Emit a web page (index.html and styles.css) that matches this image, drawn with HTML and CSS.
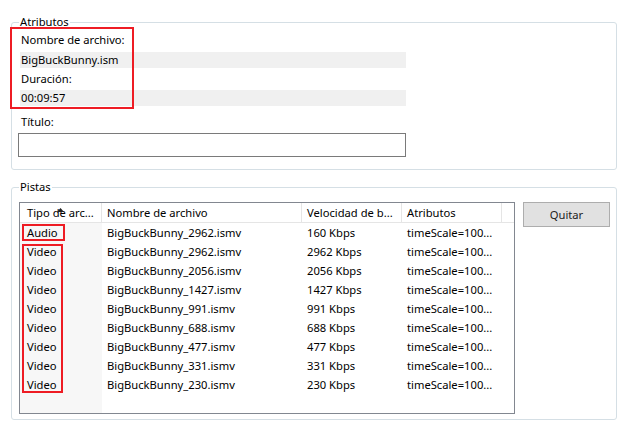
FILE: index.html
```html
<!DOCTYPE html>
<html lang="es">
<head>
<meta charset="utf-8">
<title>Atributos</title>
<link rel="stylesheet" href="styles.css">
</head>
<body>
<div class="page">
  <fieldset class="group group-attr">
    <legend>Atributos</legend>
    <div class="label">Nombre de archivo:</div>
    <div class="value">BigBuckBunny.ism</div>
    <div class="label label-gap">Duración:</div>
    <div class="value">00:09:57</div>
    <div class="label label-title">Título:</div>
    <div class="textbox"></div>
  </fieldset>

  <fieldset class="group group-tracks">
    <legend>Pistas</legend>
    <div class="tracks">
      <div class="listview">
        <div class="lv-header">
          <div class="hcell c1">Tipo de arc...<svg class="sort" width="7" height="4" viewBox="0 0 7 4"><polygon points="0,4 3.5,0 7,4" fill="#222"/></svg></div>
          <div class="hcell c2">Nombre de archivo</div>
          <div class="hcell c3">Velocidad de b...</div>
          <div class="hcell c4">Atributos</div>
        </div>
        <div class="lv-body">
          <div class="row"><span class="cell c1">Audio</span><span class="cell c2">BigBuckBunny_2962.ismv</span><span class="cell c3">160 Kbps</span><span class="cell c4">timeScale=100...</span></div>
          <div class="row"><span class="cell c1">Video</span><span class="cell c2">BigBuckBunny_2962.ismv</span><span class="cell c3">2962 Kbps</span><span class="cell c4">timeScale=100...</span></div>
          <div class="row"><span class="cell c1">Video</span><span class="cell c2">BigBuckBunny_2056.ismv</span><span class="cell c3">2056 Kbps</span><span class="cell c4">timeScale=100...</span></div>
          <div class="row"><span class="cell c1">Video</span><span class="cell c2">BigBuckBunny_1427.ismv</span><span class="cell c3">1427 Kbps</span><span class="cell c4">timeScale=100...</span></div>
          <div class="row"><span class="cell c1">Video</span><span class="cell c2">BigBuckBunny_991.ismv</span><span class="cell c3">991 Kbps</span><span class="cell c4">timeScale=100...</span></div>
          <div class="row"><span class="cell c1">Video</span><span class="cell c2">BigBuckBunny_688.ismv</span><span class="cell c3">688 Kbps</span><span class="cell c4">timeScale=100...</span></div>
          <div class="row"><span class="cell c1">Video</span><span class="cell c2">BigBuckBunny_477.ismv</span><span class="cell c3">477 Kbps</span><span class="cell c4">timeScale=100...</span></div>
          <div class="row"><span class="cell c1">Video</span><span class="cell c2">BigBuckBunny_331.ismv</span><span class="cell c3">331 Kbps</span><span class="cell c4">timeScale=100...</span></div>
          <div class="row"><span class="cell c1">Video</span><span class="cell c2">BigBuckBunny_230.ismv</span><span class="cell c3">230 Kbps</span><span class="cell c4">timeScale=100...</span></div>
        </div>
      </div>
      <button class="btn" type="button">Quitar</button>
    </div>
  </fieldset>

  <div class="mark mark-attr"></div>
  <div class="mark mark-audio"></div>
  <div class="mark mark-video"></div>
</div>
</body>
</html>
```

FILE: styles.css
```css
* { box-sizing: border-box; }

html, body {
  margin: 0;
  padding: 0;
  background: #ffffff;
}

body {
  font-family: "Noto Sans", "Open Sans", sans-serif;
  font-size: 11.2px;
  color: #000000;
}

.page {
  position: relative;
  width: 623px;
  height: 428px;
  padding-top: 14px;
}

.group {
  margin: 0 0 0 11px;
  width: 606px;
  border: 1px solid #d5dfe5;
  border-radius: 3px;
  padding: 0 0 12px 7px;
  min-inline-size: 0;
}

.group legend {
  padding: 0 1px;
  margin: 0;
  line-height: 16px;
  height: 16px;
  color: #000;
}

.label {
  margin-top: 3px;
  padding-left: 2px;
  line-height: 16px;
  height: 16px;
}

.group-attr .label:first-of-type {
  margin-top: 2px;
}

.value {
  margin-top: 4px;
  margin-left: 1px;
  width: 386px;
  height: 16px;
  line-height: 16px;
  padding-left: 1px;
  background: #f0f0f0;
}

.label-gap + .value {
  margin-top: 3px;
}

.label-title {
  margin-top: 8px;
}

.textbox {
  margin-top: 3px;
  margin-left: -1px;
  width: 388px;
  height: 24px;
  border: 1px solid #7a7a7a;
  background: #fff;
}

.group-tracks {
  margin-top: 9px;
  padding-bottom: 5px;
}

.tracks {
  display: flex;
  align-items: flex-start;
  gap: 8px;
  margin-top: 7px;
}

.listview {
  width: 496px;
  height: 212px;
  border: 1px solid #828790;
  display: flex;
  flex-direction: column;
  background: #fff;
}

.lv-header {
  display: flex;
  height: 20px;
  border-bottom: 1px solid #e5e5e5;
  flex: none;
}

.hcell {
  position: relative;
  height: 19px;
  line-height: 20px;
  border-right: 1px solid #e5e5e5;
  padding-left: 5px;
  white-space: nowrap;
  overflow: hidden;
}

.c1 { width: 82px; padding-left: 7px; }
.c2 { width: 200px; }
.c3 { width: 100px; }
.c4 { width: 100px; }

.sort {
  position: absolute;
  left: 37px;
  top: 5px;
}

.lv-body {
  flex: 1;
  background: linear-gradient(to right, #f7f7f7 82px, #ffffff 82px);
}

.row {
  display: flex;
  height: 19px;
  line-height: 19px;
}

.cell {
  display: block;
  padding-left: 5px;
  white-space: nowrap;
  overflow: hidden;
}

.cell.c1 { padding-left: 7px; }

.btn {
  width: 87px;
  height: 25px;
  margin: 0;
  padding: 0;
  border: 1px solid #adadad;
  background: #e1e1e1;
  font-family: inherit;
  font-size: 11.2px;
  color: #222;
}

.mark {
  position: absolute;
  border: 2px solid #ee1c24;
}

.mark-attr { left: 10px; top: 27px; width: 124px; height: 82px; }
.mark-audio { left: 22px; top: 224px; width: 43px; height: 17px; }
.mark-video { left: 22px; top: 244px; width: 41px; height: 149px; }
```
